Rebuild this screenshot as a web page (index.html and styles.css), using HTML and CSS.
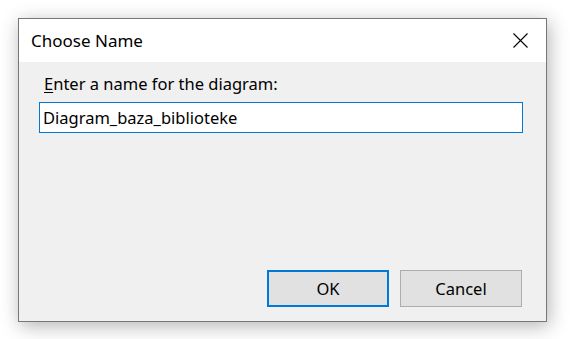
FILE: index.html
```html
<!DOCTYPE html>
<html>
<head>
<meta charset="utf-8">
<link rel="stylesheet" href="styles.css">
</head>
<body>
<div class="dialog">
  <div class="titlebar">
    <span class="title">Choose Name</span>
    <svg class="close" width="15" height="15" viewBox="0 0 15 15"><path d="M0.5 0.5 L14.5 14.5 M14.5 0.5 L0.5 14.5" stroke="#000" stroke-width="1.1" fill="none"/></svg>
  </div>
  <div class="content">
    <div class="label"><u>E</u>nter a name for the diagram:</div>
    <div class="input">Diagram_baza_biblioteke</div>
    <div class="buttons">
      <div class="btn default">OK</div>
      <div class="btn">Cancel</div>
    </div>
  </div>
</div>
</body>
</html>
```
FILE: styles.css
```css
html, body {
  margin: 0;
  padding: 0;
  background: #ffffff;
}
body {
  width: 570px;
  height: 339px;
  overflow: hidden;
  font-family: "Noto Sans", "Open Sans", sans-serif;
  color: #000;
}
.dialog {
  margin: 18px 0 0 18px;
  width: 527px;
  height: 302px;
  border: 1px solid #777777;
  box-shadow: 2px 4px 18px rgba(0, 0, 0, 0.3);
  display: flex;
  flex-direction: column;
  background: #f0f0f0;
}
.titlebar {
  height: 43px;
  box-sizing: border-box;
  background: #ffffff;
  display: flex;
  align-items: flex-start;
  justify-content: space-between;
  padding: 12px 18px 0 12px;
}
.title {
  font-size: 17px;
  line-height: 20px;
}
.close {
  display: block;
  margin-top: 2px;
}
.content {
  flex: 1;
  display: flex;
  flex-direction: column;
  padding: 0 23px 14px 20px;
}
.label {
  font-size: 16.5px;
  line-height: 20px;
  margin-top: 12px;
  padding-left: 5px;
}
.label u {
  text-underline-offset: 2px;
}
.input {
  margin-top: 8px;
  height: 29px;
  border: 1px solid #0078d7;
  background: #ffffff;
  font-size: 16.5px;
  line-height: 29px;
  padding-left: 3px;
}
.buttons {
  margin-top: auto;
  display: flex;
  justify-content: flex-end;
  gap: 11px;
  margin-right: 1px;
}
.btn {
  width: 120px;
  height: 35px;
  border: 1px solid #adadad;
  background: #e1e1e1;
  font-size: 16.5px;
  line-height: 35px;
  text-align: center;
}
.btn.default {
  width: 118px;
  height: 33px;
  line-height: 33px;
  border: 2px solid #0078d7;
}
```
